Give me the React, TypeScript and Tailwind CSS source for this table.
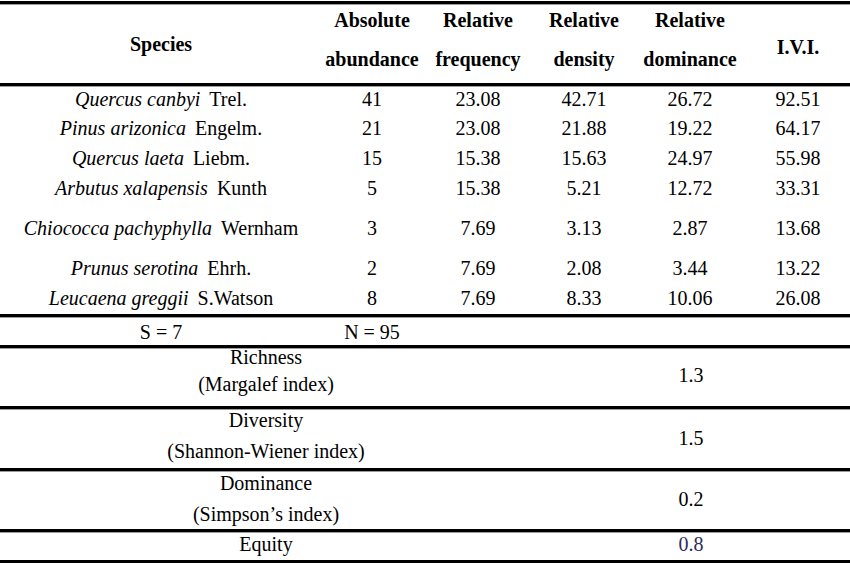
const cols = "grid grid-cols-[322px_100px_112px_100px_112px_104px]";

type Row = {
  genus: string;
  author: string;
  values: string[];
  h: string;
};

const rows: Row[] = [
  { genus: "Quercus canbyi", author: "Trel.", values: ["41", "23.08", "42.71", "26.72", "92.51"], h: "h-[28px]" },
  { genus: "Pinus arizonica", author: "Engelm.", values: ["21", "23.08", "21.88", "19.22", "64.17"], h: "h-[30px]" },
  { genus: "Quercus laeta", author: "Liebm.", values: ["15", "15.38", "15.63", "24.97", "55.98"], h: "h-[30px]" },
  { genus: "Arbutus xalapensis", author: "Kunth", values: ["5", "15.38", "5.21", "12.72", "33.31"], h: "h-[30px]" },
  { genus: "Chiococca pachyphylla", author: "Wernham", values: ["3", "7.69", "3.13", "2.87", "13.68"], h: "h-[50px]" },
  { genus: "Prunus serotina", author: "Ehrh.", values: ["2", "7.69", "2.08", "3.44", "13.22"], h: "h-[30px]" },
  { genus: "Leucaena greggii", author: "S.Watson", values: ["8", "7.69", "8.33", "10.06", "26.08"], h: "h-[29px]" },
];

const indices = [
  { label: ["Richness", "(Margalef index)"], value: "1.3", h: "h-[57px]", lead: "leading-[27px] -translate-y-[7px]", vshift: "-translate-y-[3px]" },
  { label: ["Diversity", "(Shannon-Wiener index)"], value: "1.5", h: "h-[58px]", lead: "leading-[31px] -translate-y-[5px]", vshift: "-translate-y-[3px]" },
  { label: ["Dominance", "(Simpson\u2019s index)"], value: "0.2", h: "h-[57px]", lead: "leading-[31px] -translate-y-[4px]", vshift: "-translate-y-[4px]" },
];

function Rule() {
  return (
    <div className="flex flex-col">
      <div className="h-[3px] bg-black" />
      <div className="h-px bg-[#9c9c9c]" />
    </div>
  );
}

function TwoLine({ a, b }: { a: string; b: string }) {
  return (
    <div className="flex flex-col justify-center -translate-y-[4px]">
      <span>{a}</span>
      <span>{b}</span>
    </div>
  );
}

export default function App() {
  return (
    <div className="w-[850px] h-[563px] bg-white pt-px text-[20px] text-black font-[family-name:Liberation_Serif,serif] overflow-hidden">
      <Rule />
      {/* header */}
      <div className={`${cols} h-[78px] font-bold leading-[39px] text-center`}>
        <div className="flex items-center justify-center">Species</div>
        <TwoLine a="Absolute" b="abundance" />
        <TwoLine a="Relative" b="frequency" />
        <TwoLine a="Relative" b="density" />
        <TwoLine a="Relative" b="dominance" />
        <div className="flex items-center justify-center pt-1.5">I.V.I.</div>
      </div>
      <Rule />

      {/* species rows */}
      {rows.map((r) => (
        <div key={r.genus} className={`${cols} ${r.h} items-center text-center leading-none pb-[4px]`}>
          <div>
            <i>{r.genus}</i>
            <span className="ml-[9px]">{r.author}</span>
          </div>
          {r.values.map((v, i) => (
            <div key={i}>{v}</div>
          ))}
        </div>
      ))}
      <Rule />

      <div className={`${cols} h-[27px] items-center text-center leading-none`}>
        <div>S = 7</div>
        <div>N = 95</div>
      </div>
      <Rule />

      {indices.map((x) => (
        <div key={x.value}>
          <div className={`grid grid-cols-[532px_318px] ${x.h} items-center text-center`}>
            <div className={`flex flex-col ${x.lead}`}>
              <span>{x.label[0]}</span>
              <span>{x.label[1]}</span>
            </div>
            <div className={`leading-none ${x.vshift}`}>{x.value}</div>
          </div>
          <Rule />
        </div>
      ))}

      <div className="grid grid-cols-[532px_318px] h-[27px] items-center text-center leading-none pb-[6px]">
        <div>Equity</div>
        <div className="text-[#2e2d5c]">0.8</div>
      </div>
      <Rule />
    </div>
  );
}
